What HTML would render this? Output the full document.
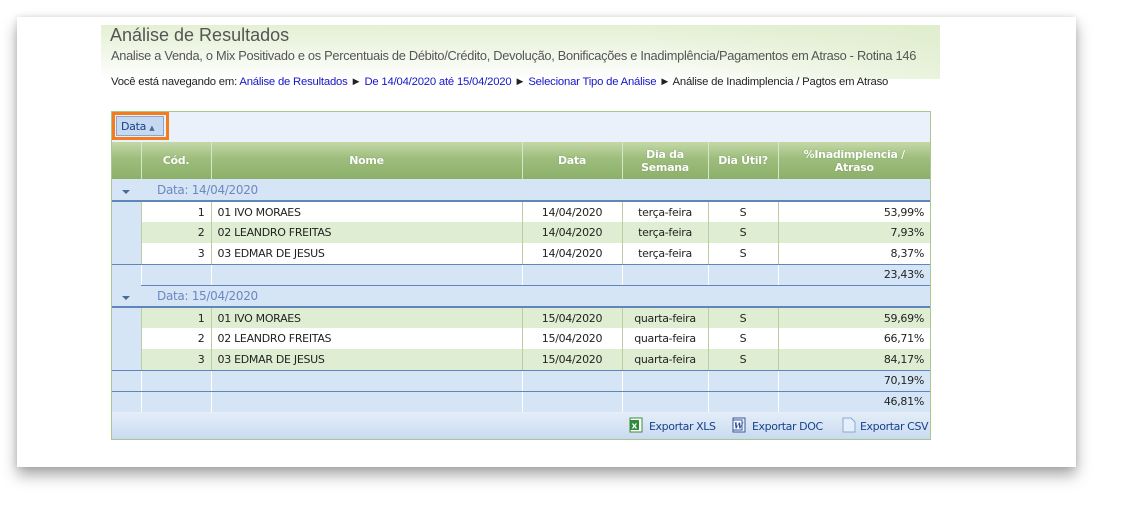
<!DOCTYPE html>
<html><head><meta charset="utf-8"><style>
*{margin:0;padding:0;box-sizing:border-box}
body{width:1124px;height:516px;background:#fff;position:relative;overflow:hidden;font-family:"Liberation Sans",sans-serif}
.card{position:absolute;left:17px;top:17px;width:1059px;height:450px;background:#fff;box-shadow:0 8px 14px rgba(0,0,0,.35),0 0 6px rgba(0,0,0,.1)}
.banner{position:absolute;left:101px;top:25px;width:839px;height:54px;background:linear-gradient(180deg,#e4f0d4 0%,#f3f8ec 60%,#fff 100%)}
.banner:after{content:"";position:absolute;right:0;top:0;width:300px;height:54px;background:linear-gradient(90deg,rgba(255,255,255,0),rgba(220,235,200,.6))}
.t1{position:absolute;left:110px;top:25px;font-size:18px;color:#555}
.t2{position:absolute;left:111px;top:48px;font-size:12.8px;color:#555;letter-spacing:-0.28px}
.crumb{position:absolute;left:111px;top:76px;font-size:11.3px;color:#222;letter-spacing:-0.2px}
.crumb a{color:#1515c8;text-decoration:none}
.grid{position:absolute;left:111px;top:111px;width:820px;height:329px;border:1px solid #a8c890;background:#d6e5f5}
.tool{position:absolute;left:0;top:0;width:818px;height:30px;background:#eaf1fb}
.ob{position:absolute;left:0;top:0;width:57px;height:28px;border:3px solid #f47c20}
.ob div{position:absolute;left:1px;top:1px;width:48px;height:20px;background:#c6d9f0;border:1px solid #8aa6cf;font-size:11px;color:#15428b;padding:3px 0 0 4px;font-family:"DejaVu Sans",sans-serif;letter-spacing:-0.3px}
table{position:absolute;left:0;top:30px;border-collapse:collapse;table-layout:fixed;font-size:11px;font-family:"DejaVu Sans",sans-serif;letter-spacing:-0.3px;color:#222}
th{height:37px;background:linear-gradient(180deg,#c4d8a8 0%,#9dbd7c 45%,#8cb06a 100%);color:#fff;font-weight:bold;font-size:11px;border-left:1px solid #d7e6c6;line-height:13px;text-shadow:0 0 1px #6a8a50}
th:first-child{border-left:none}
td{height:21px;border-left:1px solid #b9cfa3;padding:0 6px}
tr.w td{background:#fff}
tr.g td{background:#dfeed2}
tr.w td:first-child,tr.g td:first-child{background:#d6e5f5;border-left:none}
tr.s td{background:#d6e5f5;border-left:1px solid #fff}
tr.s td:first-child{border-left:none}
tr.s td{border-bottom:1px solid #5f86b8}
tr.last td{border-bottom:1px solid #5f86b8}
tr.grp td{height:22px;border:none;color:#6b88c0;font-size:12px;background:#d6e5f5}
tr.grp+tr td{border-top:2px solid #5f86b8}
.r{text-align:right}.c{text-align:center}
.arr{display:inline-block;width:0;height:0;border-left:4px solid transparent;border-right:4px solid transparent;border-top:4px solid #4a6b9a;margin-left:4px}
.foot{position:absolute;left:0;top:300px;width:818px;height:27px;background:linear-gradient(180deg,#e5eef9,#c9daf0);font-size:11px;font-family:"DejaVu Sans",sans-serif;color:#15428b;letter-spacing:-0.4px}
.foot span{position:absolute;top:8px}
.ic{position:absolute;top:5px;width:14px;height:16px}
</style></head><body>
<div class="card"></div>
<div class="banner"></div>
<div class="t1">Análise de Resultados</div>
<div class="t2">Analise a Venda, o Mix Positivado e os Percentuais de Débito/Crédito, Devolução, Bonificações e Inadimplência/Pagamentos em Atraso - Rotina 146</div>
<div class="crumb">Você está navegando em: <a>Análise de Resultados</a> ► <a>De 14/04/2020 até 15/04/2020</a> ► <a>Selecionar Tipo de Análise</a> ► Análise de Inadimplencia / Pagtos em Atraso</div>
<div class="grid">
<div class="tool"><div class="ob"><div>Data <span style="font-size:7px;color:#4a6b9a">▲</span></div></div></div>
<table>
<colgroup><col style="width:29px"><col style="width:70px"><col style="width:311px"><col style="width:100px"><col style="width:86px"><col style="width:70px"><col style="width:152px"></colgroup>
<tr><th></th><th>Cód.</th><th>Nome</th><th>Data</th><th>Dia da<br>Semana</th><th>Dia Útil?</th><th>%Inadimplencia /<br>Atraso</th></tr>
<tr class="grp"><td><span class="arr"></span></td><td colspan="6" style="padding-left:16px">Data: 14/04/2020</td></tr>
<tr class="w"><td></td><td class="r">1</td><td>01 IVO MORAES</td><td class="c">14/04/2020</td><td class="c">terça-feira</td><td class="c">S</td><td class="r">53,99%</td></tr>
<tr class="g"><td></td><td class="r">2</td><td>02 LEANDRO FREITAS</td><td class="c">14/04/2020</td><td class="c">terça-feira</td><td class="c">S</td><td class="r">7,93%</td></tr>
<tr class="w last"><td></td><td class="r">3</td><td>03 EDMAR DE JESUS</td><td class="c">14/04/2020</td><td class="c">terça-feira</td><td class="c">S</td><td class="r">8,37%</td></tr>
<tr class="s"><td style="border-bottom:none"></td><td></td><td></td><td></td><td></td><td></td><td class="r">23,43%</td></tr>
<tr class="grp"><td><span class="arr"></span></td><td colspan="6" style="padding-left:16px">Data: 15/04/2020</td></tr>
<tr class="g"><td></td><td class="r">1</td><td>01 IVO MORAES</td><td class="c">15/04/2020</td><td class="c">quarta-feira</td><td class="c">S</td><td class="r">59,69%</td></tr>
<tr class="w"><td></td><td class="r">2</td><td>02 LEANDRO FREITAS</td><td class="c">15/04/2020</td><td class="c">quarta-feira</td><td class="c">S</td><td class="r">66,71%</td></tr>
<tr class="g last"><td></td><td class="r">3</td><td>03 EDMAR DE JESUS</td><td class="c">15/04/2020</td><td class="c">quarta-feira</td><td class="c">S</td><td class="r">84,17%</td></tr>
<tr class="s"><td></td><td></td><td></td><td></td><td></td><td></td><td class="r">70,19%</td></tr>
<tr class="s"><td></td><td></td><td></td><td></td><td></td><td></td><td class="r">46,81%</td></tr>
</table>
<div class="foot">
<svg class="ic" style="left:517px" viewBox="0 0 14 16"><rect x="1" y="1" width="12" height="14" fill="#fff" stroke="#3a8a3a"/><rect x="1" y="3" width="9" height="10" fill="#2e8b3a"/><text x="2.5" y="11.5" font-size="9" font-weight="bold" fill="#fff" font-family="DejaVu Sans">x</text></svg>
<span style="left:537px">Exportar XLS</span>
<svg class="ic" style="left:620px" viewBox="0 0 14 16"><rect x="1" y="1" width="12" height="14" fill="#e8eef8" stroke="#3a5a9a"/><rect x="1" y="3" width="9" height="10" fill="#fff" stroke="#3a5a9a"/><text x="2" y="11.5" font-size="8" font-style="italic" font-weight="bold" fill="#2a4a9a" font-family="DejaVu Serif">W</text></svg>
<span style="left:640px">Exportar DOC</span>
<svg class="ic" style="left:730px" viewBox="0 0 14 16"><path d="M1 1H9L13 5V15H1Z" fill="#e4effb" stroke="#8aaad0"/></svg>
<span style="left:748px">Exportar CSV</span>
</div>
</div>
</body></html>
